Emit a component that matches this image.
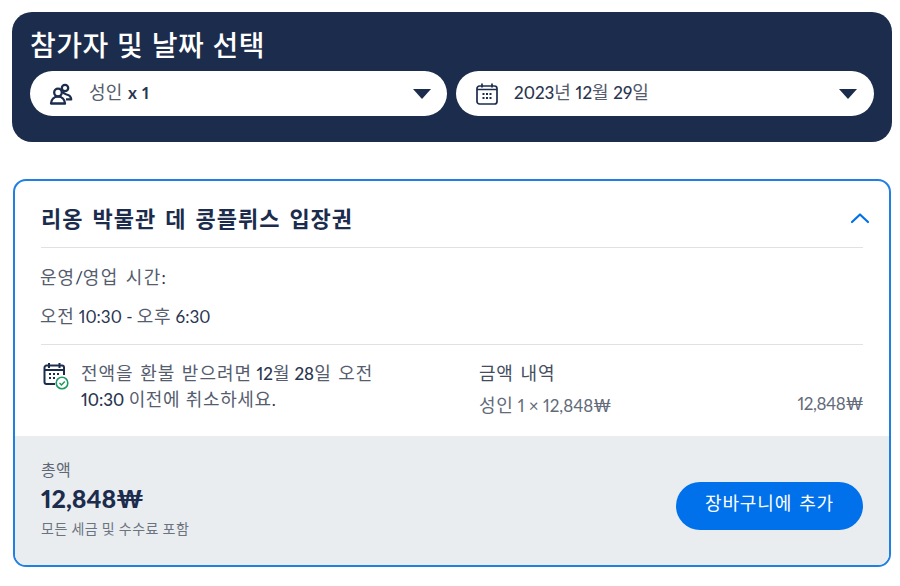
<script>
  const font = 1;
</script>

<div class="page">
  <section class="picker">
    <h1>참가자 및 날짜 선택</h1>
    <div class="pills">
      <div class="pill p1">
        <svg class="ic-people" viewBox="0 0 24 24" width="24" height="24" fill="none" stroke="#1c2c4c" stroke-width="2.300" stroke-linejoin="round">
          <circle cx="9" cy="10.500" r="3.800" />
          <circle cx="16" cy="6" r="3.200" />
          <path d="M2 21.500c.3-4 3-6.800 7-6.800s6.700 2.800 7 6.800z" />
          <path d="M13.500 9.500c.8 1.800 2.300 2.500 4 3 2.800.6 4.500 2 4.700 4.800h-5.200" />
        </svg>
        <span class="val first"><span class="ko">성인</span> <b>x 1</b></span>
        <span class="caret"></span>
      </div>
      <div class="pill p2">
        <svg class="ic-cal" viewBox="0 0 24 24" width="24" height="24" fill="none" stroke="#1c2c4c" stroke-width="1.700">
          <rect x="2" y="4" width="20" height="18" rx="2.500" />
          <path d="M7 1.500v4M17 1.500v4M2 7.500h20" />
          <g fill="#1c2c4c" stroke="none">
            <rect x="7.500" y="11" width="2" height="2" /><rect x="11" y="11" width="2" height="2" /><rect x="14.500" y="11" width="2" height="2" />
            <rect x="7.500" y="15" width="2" height="2" /><rect x="11" y="15" width="2" height="2" /><rect x="14.500" y="15" width="2" height="2" />
          </g>
        </svg>
        <span class="val second"><b>2023</b><span class="ko">년</span> <b>12</b><span class="ko">월</span> <b>29</b><span class="ko">일</span></span>
        <span class="caret"></span>
      </div>
    </div>
  </section>

  <section class="card">
    <div class="body">
      <div class="head">
        <h2>리옹 박물관 데 콩플뤼스 입장권</h2>
        <svg viewBox="0 0 20 12" width="20" height="12" fill="none" stroke="#0071eb" stroke-width="2.200" stroke-linecap="round" stroke-linejoin="round"><path d="M2 10l8-7.500 8 7.500" /></svg>
      </div>
      <div class="hours">
        <p class="hours-label"><span class="ko wide">운영</span>/<span class="ko wider">영업 시간</span>:</p>
        <p class="hours-val"><span class="ko">오전</span> 10:30 - <span class="ko">오후</span> 6:30</p>
      </div>
      <div class="details">
        <div class="cancel">
          <svg viewBox="0 0 28 28" width="28" height="28" fill="none" stroke="#1c2c4c" stroke-width="2">
            <path d="M13 22H4.500a2 2 0 0 1-2-2V5.500a2 2 0 0 1 2-2h15.500a2 2 0 0 1 2 2V13" />
            <path d="M7 1v5M17.500 1v5M3 8h19" />
            <g fill="#1c2c4c" stroke="none">
              <rect x="7" y="11" width="2" height="2" /><rect x="11" y="11" width="2" height="2" /><rect x="15" y="11" width="2" height="2" />
              <rect x="7" y="15" width="2" height="2" /><rect x="11" y="15" width="2" height="2" />
            </g>
            <circle cx="20" cy="21" r="5.800" fill="#fff" stroke="#1f9a63" stroke-width="1.600" />
            <path d="M17.500 21l2 2 3.300-3.600" stroke="#1f9a63" stroke-width="1.500" />
          </svg>
          <p><span class="ko wide">전액을 환불 받으려면</span> <b>12</b><span class="ko">월</span> <b>28</b><span class="ko wide">일 오전</span><br /><b>10:30</b> <span class="ko">이전에 취소하세요</span>.</p>
        </div>
        <div class="price">
          <p class="price-title">금액 내역</p>
          <div class="price-row">
            <span><span class="ko">성인</span> 1 × 12,848₩</span>
            <span class="row-total">12,848₩</span>
          </div>
        </div>
      </div>
    </div>
    <div class="foot">
      <div class="total">
        <span class="total-label">총액</span>
        <strong>12,848₩</strong>
        <span class="total-note">모든 세금 및 수수료 포함</span>
      </div>
      <button>장바구니에 추가</button>
    </div>
  </section>
</div>

<style>
  :global(body) {
    margin: 0;
    background: #fff;
  }
  .page {
    width: 900px;
    height: 586px;
    box-sizing: border-box;
    padding: 12px 8px 0 12px;
    font-family: "Lato", "Noto Sans CJK KR", sans-serif;
    font-variant-numeric: proportional-nums;
    color: #1c2c4c;
    overflow: hidden;
  }
  p, h1, h2 { margin: 0; }
  .ko { font-family: "Noto Sans CJK KR", sans-serif; font-weight: 400; font-size: 18px; letter-spacing: .6px; word-spacing: 1px; }
  .ko.wide { letter-spacing: 1px; word-spacing: 1.500px; }
  .ko.wider { letter-spacing: 1.300px; word-spacing: 2px; }
  .picker {
    height: 130px;
    box-sizing: border-box;
    background: #1c2c4c;
    border-radius: 20px;
    padding: 14px 18px 0;
  }
  h1 {
    font: 500 28px/36px "Noto Sans CJK KR", sans-serif;
    letter-spacing: .5px;
    word-spacing: 1.500px;
    color: #fff;
    margin-bottom: 9px;
  }
  .pills { display: flex; gap: 9px; }
  .pill {
    height: 45px;
    box-sizing: border-box;
    background: #fff;
    border-radius: 23px;
    display: flex;
    align-items: center;
    padding: 0 16px 0 19px;
  }
  .p1 { width: 417px; }
  .p2 { width: 418px; padding-right: 17px; }
  .val { flex: 1; font-size: 17px; color: #33405c; margin-top: -6px; }
  .val .ko { color: #555d6e; letter-spacing: .3px; }
  .val b { font-weight: 500; color: #2a3550; }
  .first { margin-left: 16px; }
  .first b { font-weight: 700; word-spacing: 1px; margin-left: 1px; }
  .second { margin-left: 15px; }
  .caret {
    width: 0;
    height: 0;
    border-left: 9px solid transparent;
    border-right: 9px solid transparent;
    border-top: 10px solid #1c2c4c;
  }
  .card {
    margin: 37px 0 0 1px;
    width: 878px;
    height: 388px;
    box-sizing: border-box;
    border: 2px solid #1f7fe3;
    border-radius: 13px;
    overflow: hidden;
    display: flex;
    flex-direction: column;
  }
  .body {
    height: 255px;
    box-sizing: border-box;
    padding: 0 26px;
  }
  .head {
    height: 66px;
    border-bottom: 1px solid #dfe1e4;
    display: flex;
    align-items: center;
    justify-content: space-between;
  }
  .head svg { margin: 8px -7px 0 0; }
  h2 {
    font: 700 22px/28px "Noto Sans CJK KR", sans-serif;
    letter-spacing: 1px;
    word-spacing: 3px;
    color: #1c2c4c;
    margin-top: 5px;
  }
  .hours {
    height: 97px;
    box-sizing: border-box;
    border-bottom: 1px solid #dfe1e4;
    padding-top: 15px;
    font-size: 17px;
    line-height: 26px;
    color: #2a3550;
  }
  .hours .ko { color: #555d6e; }
  .hours-label, .hours-val { margin-left: -1px; }
  .hours-val { margin-top: 11px; }
  .details { display: flex; padding-top: 15px; }
  .cancel { width: 438px; display: flex; gap: 10px; align-items: flex-start; margin-left: 2px; }
  .cancel svg { margin: 2px 0 0 -1px; flex: none; }
  .cancel p { font-size: 17px; line-height: 25px; color: #2a3550; margin-top: 0; white-space: nowrap; margin-left: 1px;}
  .cancel .ko { color: #555d6e; }
  .cancel b { font-weight: 500; }
  .price { flex: 1; margin-left: -2px; }
  .price-title { font: 400 18px/26px "Noto Sans CJK KR", sans-serif; letter-spacing: .8px; word-spacing: 2px; color: #444d60; margin-top: -1px; }
  .price-row {
    display: flex;
    justify-content: space-between;
    font-size: 17px;
    line-height: 24px;
    color: #636b7a;
    margin-top: 7px;
  }
  .row-total { letter-spacing: -.4px; }
  .foot {
    flex: 1;
    background: #e9edf0;
    padding: 0 26px;
    display: flex;
    align-items: center;
    justify-content: space-between;
  }
  .total { display: flex; flex-direction: column; margin-top: -3px; }
  .total-label { font: 400 16px/22px "Noto Sans CJK KR", sans-serif; letter-spacing: .2px; color: #5f6775; margin-top: -2px; }
  .total strong { font-size: 25px; line-height: 34px; font-weight: 900; color: #1c2c4c; margin-top: 1px; }
  .total-note { font: 400 14px/20px "Noto Sans CJK KR", sans-serif; letter-spacing: .5px; color: #6c7380; margin-top: 3px; }
  button {
    width: 187px;
    height: 48px;
    border: 0;
    border-radius: 24px;
    background: #0071eb;
    color: #fff;
    font: 400 18px "Noto Sans CJK KR", sans-serif;
    letter-spacing: .9px;
    word-spacing: 2px;
    padding: 0 0 7px;
    margin-top: 10px;
  }
</style>
